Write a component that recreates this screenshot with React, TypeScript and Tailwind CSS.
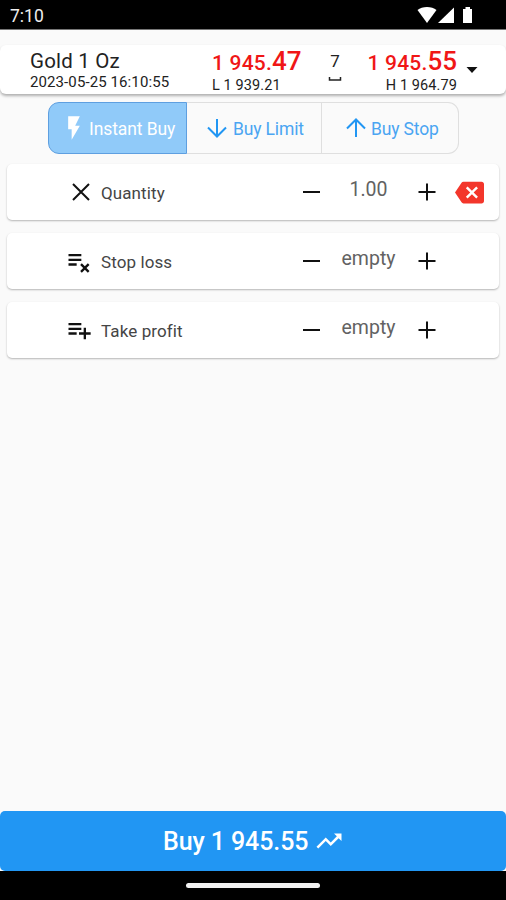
import React from 'react';

type IconProps = { d: string; className?: string };

function Icon({ d, className = '' }: IconProps) {
  return (
    <svg viewBox="0 0 24 24" fill="currentColor" className={`shrink-0 ${className}`}>
      <path d={d} />
    </svg>
  );
}

const BOLT = 'M7 2v11h3v9l7-12h-4l4-8z';
const TREND = 'M16 6l2.29 2.29-4.88 4.88-4-4L2 16.59 3.41 18l6-6 4 4 6.3-6.29L22 12V6z';
const BACKSPACE =
  'M22 3H7c-.69 0-1.23.35-1.59.88L0 12l5.41 8.11c.36.53.9.89 1.59.89h15c1.1 0 2-.9 2-2V5c0-1.1-.9-2-2-2zm-3 12.59L17.59 17 14 13.41 10.41 17 9 15.59 12.59 12 9 8.41 10.41 7 14 10.59 17.59 7 19 8.41 15.41 12 19 15.59z';
const LIST_REMOVE =
  'M14 10H3v2h11v-2zm0-4H3v2h11V6zM3 16h7v-2H3v2zm11.41 6L17 19.41 19.59 22 21 20.59 18.41 18 21 15.41 19.59 14 17 16.59 14.41 14 13 15.41 15.59 18 13 20.59 14.41 22z';
const LIST_ADD = 'M14 10H3v2h11v-2zm0-4H3v2h11V6zm4 8v-4h-2v4h-4v2h4v4h2v-4h4v-2h-4zM3 16h7v-2H3v2z';

function StatusBar() {
  return (
    <div className="flex h-[30px] shrink-0 items-start border-b border-[#777] bg-black pl-[10px] text-[#eee]">
      <span className="mt-[6px] w-[407px] text-[17.500px] leading-5">7:10</span>
      <svg width="58" height="18" viewBox="0 0 58 18" fill="white" className="mt-[6px]">
        <path d="M0.5 4C5 0 15 0 19.5 4L10 17z" />
        <path d="M37 1.5V17H21z" />
        <path d="M46 3h2.500V1h4.500v2h2v14H46z" />
      </svg>
    </div>
  );
}

function Price({ head, tail }: { head: string; tail: string }) {
  return (
    <div className="flex items-baseline font-medium leading-6 text-[#f01616]">
      <span className="text-[21px] tracking-[0.2px]">{head}</span>
      <span className="text-[26px]">{tail}</span>
    </div>
  );
}

function QuoteCard() {
  return (
    <div className="mt-[15px] flex h-[49px] shrink-0 rounded-[6px] bg-white pl-[30px] text-[#222] shadow-[0_2px_3px_rgba(0,0,0,0.3)]">
      <div className="w-[182px] pt-[4px]">
        <div className="text-[20.500px] leading-6 tracking-[0.2px]">Gold 1 Oz</div>
        <div className="mt-[1px] text-[15px] leading-[17px] tracking-[0.1px]">2023-05-25 16:10:55</div>
      </div>
      <div className="w-[114px] pt-[4px]">
        <Price head="1 945." tail="47" />
        <div className="mt-[3px] text-[14.500px] leading-4 tracking-[0.1px]">L 1 939.21</div>
      </div>
      <div className="flex w-[18px] flex-col items-center pt-[6px]">
        <span className="text-[17px] leading-5">7</span>
        <svg width="14" height="6" viewBox="0 0 14 6" fill="none" stroke="currentColor" strokeWidth="1.500" className="mt-[5px]">
          <path d="M1.500 1v3h11V1" />
        </svg>
      </div>
      <div className="flex w-[113px] flex-col items-end pt-[4px]">
        <Price head="1 945." tail="55" />
        <div className="mt-[3px] text-[14.500px] leading-4 tracking-[0.1px]">H 1 964.79</div>
      </div>
      <svg width="12" height="6" viewBox="0 0 12 6" fill="#111" className="ml-[9px] mt-[22px]">
        <path d="M0.500 0h11L6 6z" />
      </svg>
    </div>
  );
}

function Arrow({ up = false }: { up?: boolean }) {
  return (
    <svg width="20" height="20" viewBox="0 0 20 20" fill="none" stroke="#2196f3" strokeWidth="2" className={up ? '' : 'rotate-180'}>
      <path d="M10 19V2M1 10.500L10 1.500l9 9" />
    </svg>
  );
}

function OrderTabs() {
  return (
    <div className="ml-[48px] mt-[8px] flex h-[52px] w-[411px] shrink-0 text-[17.500px] text-[#4aa5f2]">
      <div className="flex w-[139px] items-center rounded-l-[11px] border border-[#5e9fe0] bg-[#90caf9] pl-[11px] text-white">
        <Icon d={BOLT} className="size-[28px]" />
        <span className="ml-px pt-[2px] tracking-[-0.1px]">Instant Buy</span>
      </div>
      <div className="flex w-[135px] items-center border-y border-r border-[#dfdfdf] pl-[20px]">
        <Arrow />
        <span className="ml-[6px] pt-[2px] tracking-[-0.15px]">Buy Limit</span>
      </div>
      <div className="flex w-[137px] items-center rounded-r-[11px] border-y border-r border-[#dfdfdf] pl-[24px]">
        <Arrow up />
        <span className="ml-[5px] pt-[2px] tracking-[-0.15px]">Buy Stop</span>
      </div>
    </div>
  );
}

type RowProps = { icon: React.ReactNode; label: string; value: string; clearable?: boolean };

function FieldRow({ icon, label, value, clearable }: RowProps) {
  return (
    <div className="flex h-[56px] items-center rounded-[5px] bg-white pl-[58px] text-[#111] shadow-[0_1px_2px_rgba(0,0,0,0.28)]">
      <div className="flex w-[36px] items-center">{icon}</div>
      <span className="w-[202px] pt-[3px] text-[17px] tracking-[0.1px] text-[#454545]">{label}</span>
      <span className="h-[2px] w-[17px] bg-current" />
      <span className="w-[97px] pb-[4px] text-center text-[19.500px] text-[#626262]">{value}</span>
      <svg width="18" height="18" viewBox="0 0 18 18" stroke="currentColor" strokeWidth="2" className="ml-px">
        <path d="M0.500 9h17M9 0.500v17" />
      </svg>
      {clearable && <Icon d={BACKSPACE} className="ml-[19px] size-[29px] text-[#f3362b]" />}
    </div>
  );
}

export default function App() {
  return (
    <div className="flex h-[900px] w-[506px] flex-col overflow-hidden bg-[#fafafa] font-[Roboto,sans-serif] whitespace-nowrap">
      <StatusBar />
      <QuoteCard />
      <OrderTabs />
      <div className="mx-[7px] mt-[10px] flex flex-1 flex-col gap-[13px]">
        <FieldRow
          icon={
            <svg width="18" height="18" viewBox="0 0 18 18" stroke="currentColor" strokeWidth="2" className="ml-[7px]">
              <path d="M1 1l16 16M17 1L1 17" />
            </svg>
          }
          label="Quantity"
          value="1.00"
          clearable
        />
        <FieldRow icon={<Icon d={LIST_REMOVE} className="size-[28px]" />} label="Stop loss" value="empty" />
        <FieldRow icon={<Icon d={LIST_ADD} className="size-[28px]" />} label="Take profit" value="empty" />
      </div>
      <button className="flex h-[60px] w-full shrink-0 items-center rounded-[5px] bg-[#2196f3] pl-[163px] text-[25px] font-medium text-white">
        <span className="pt-[2px] tracking-[-0.1px]">Buy 1 945.55</span>
        <Icon d={TREND} className="ml-[6px] size-[30px]" />
      </button>
      <div className="flex h-[29px] shrink-0 justify-center bg-black pt-[12px]">
        <span className="h-[5px] w-[134px] rounded-full bg-[#f1f1f1]" />
      </div>
    </div>
  );
}
